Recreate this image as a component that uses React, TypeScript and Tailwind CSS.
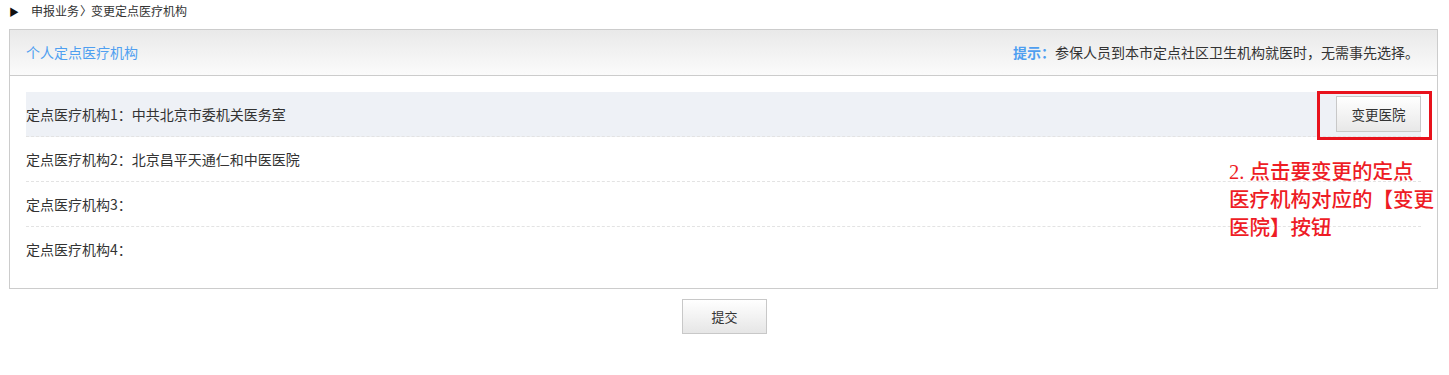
import React from "react";

const font = { fontFamily: '"Noto Sans CJK SC", "Liberation Sans", sans-serif' };

function Row({ label, value, highlight, last, button }: { label: string; value?: string; highlight?: boolean; last?: boolean; button?: boolean }) {
  return (
    <div
      className={`flex h-[45px] items-center justify-between ${highlight ? "bg-[#eef1f6]" : ""} ${last ? "" : "border-b border-dashed border-[#e3e3e3]"}`}
    >
      <div className="text-[14px] text-[#333]">
        {label}：{value}
      </div>
      {button && (
        <div className="relative">
          <button className="h-[36px] w-[85px] border border-[#c8c8c8] bg-gradient-to-b from-white to-[#e8e8e8] text-[13.5px] text-[#333]">
            变更医院
          </button>
          <div className="pointer-events-none absolute left-[-19px] top-[-5px] h-[49px] w-[115px] border-[3px] border-[#e8121c]" />
        </div>
      )}
    </div>
  );
}

export default function App() {
  return (
    <div className="relative h-[375px] w-[1449px] bg-white" style={font}>
      <div className="flex h-[22px] items-center pl-[9px] text-[12px] text-[#333]">
        <span className="text-[10px] text-[#111]">▶</span>
        <span className="ml-[12px]">申报业务</span>
        <span className="ml-[1px] mr-[-1px]">〉</span>
        <span>变更定点医疗机构</span>
      </div>
      <div className="ml-[9px] mr-[11px] mt-[7px] border border-[#cccccc]">
        <div className="flex h-[46px] items-center justify-between border-b border-[#cccccc] bg-gradient-to-b from-[#e9e9e9] to-[#fbfbfb] pl-[16px] pr-[18px]">
          <span className="text-[14px] text-[#4f9ff0]">个人定点医疗机构</span>
          <span className="text-[14px] text-[#333]">
            <span className="font-bold text-[#4f9ff0]">提示：</span>参保人员到本市定点社区卫生机构就医时，无需事先选择。
          </span>
        </div>
        <div className="px-[16px] pb-[16px] pt-[16px]">
          <Row label="定点医疗机构1" value="中共北京市委机关医务室" highlight button />
          <Row label="定点医疗机构2" value="北京昌平天通仁和中医医院" />
          <Row label="定点医疗机构3" />
          <Row label="定点医疗机构4" last />
        </div>
      </div>
      <div className="mt-[10px] flex justify-center">
        <button className="h-[35px] w-[85px] border border-[#c8c8c8] bg-gradient-to-b from-white to-[#e6e6e6] text-[13px] text-[#333]">
          提交
        </button>
      </div>
      <div
        className="absolute left-[1229px] top-[158px] whitespace-nowrap text-[20.5px] font-medium leading-[28px] text-[#ee1c25]"
        style={{ fontFamily: '"Liberation Serif", "Noto Sans CJK SC", serif' }}
      >
        2. 点击要变更的定点
        <br />
        医疗机构对应的【变更
        <br />
        医院】按钮
      </div>
    </div>
  );
}
